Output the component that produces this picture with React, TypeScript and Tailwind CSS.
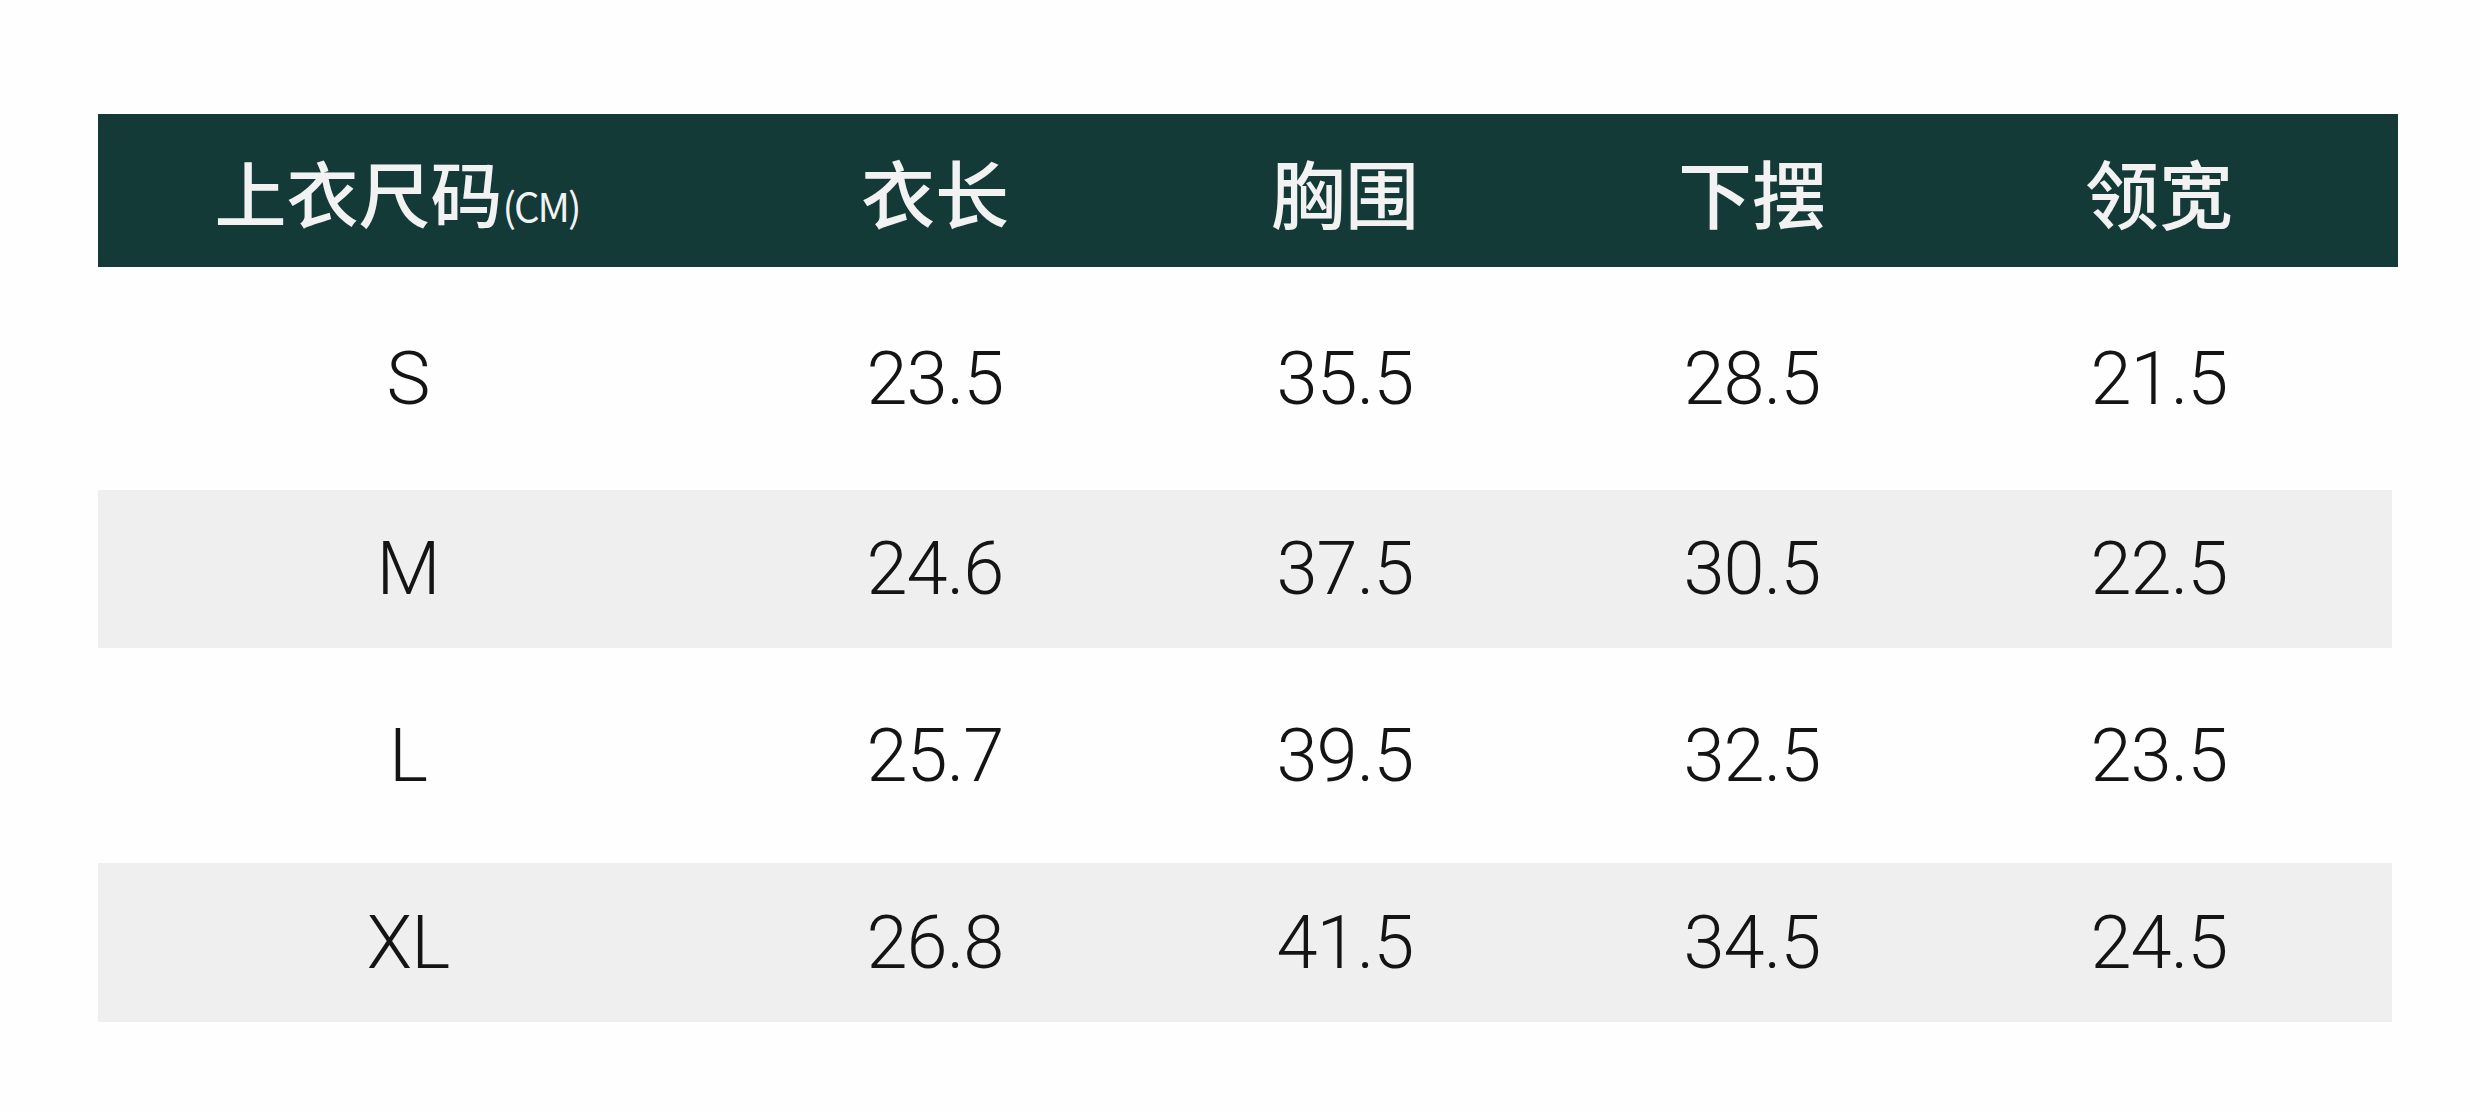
import React from 'react';

interface SizeRow {
  size: string;
  values: string[];
  shaded: boolean;
  height: string;
}

const rows: SizeRow[] = [
  { size: 'S', values: ['23.5', '35.5', '28.5', '21.5'], shaded: false, height: 'h-[223px]' },
  { size: 'M', values: ['24.6', '37.5', '30.5', '22.5'], shaded: true, height: 'h-[158px]' },
  { size: 'L', values: ['25.7', '39.5', '32.5', '23.5'], shaded: false, height: 'h-[215px]' },
  { size: 'XL', values: ['26.8', '41.5', '34.5', '24.5'], shaded: true, height: 'h-[159px]' },
];

const headers = ['衣长', '胸围', '下摆', '领宽'];

// column widths tuned so each column's text sits on the reference centre
const cols = 'grid grid-cols-[620px_434px_386px_428px_386px]';

const cjk = "font-['Noto_Sans_CJK_SC','Noto_Sans',sans-serif]";
const num = "font-['Roboto','Liberation_Sans',sans-serif]";

export default function App() {
  return (
    <div className="w-[2480px] h-[1112px] bg-[#fefefe] pt-[114px] pl-[98px]">
      {/* header */}
      <div className={`${cols} w-[2300px] h-[153px] items-center bg-[#133a37] text-[#f2f2f2]`}>
        <div className={`${cjk} flex items-baseline justify-center text-[72px] font-medium leading-none pr-[22px]`}>
          <span>上衣尺码</span>
          <span className="text-[40px] font-normal tracking-[-2px]">(CM)</span>
        </div>
        {headers.map((h) => (
          <div key={h} className={`${cjk} text-center text-[74px] font-medium leading-none`}>
            {h}
          </div>
        ))}
      </div>

      {/* body */}
      {rows.map((r) => (
        <div
          key={r.size}
          className={`${cols} w-[2294px] ${r.height} items-center ${r.shaded ? 'bg-[#efefef]' : 'bg-[#fefefe]'} text-[#141414]`}
        >
          <div className={`${num} text-center text-[74px] font-light leading-none tracking-[-1px]`}>{r.size}</div>
          {r.values.map((v, i) => (
            <div key={i} className={`${num} text-center text-[74px] font-light leading-none tracking-[-1px]`}>
              {v}
            </div>
          ))}
        </div>
      ))}
    </div>
  );
}
